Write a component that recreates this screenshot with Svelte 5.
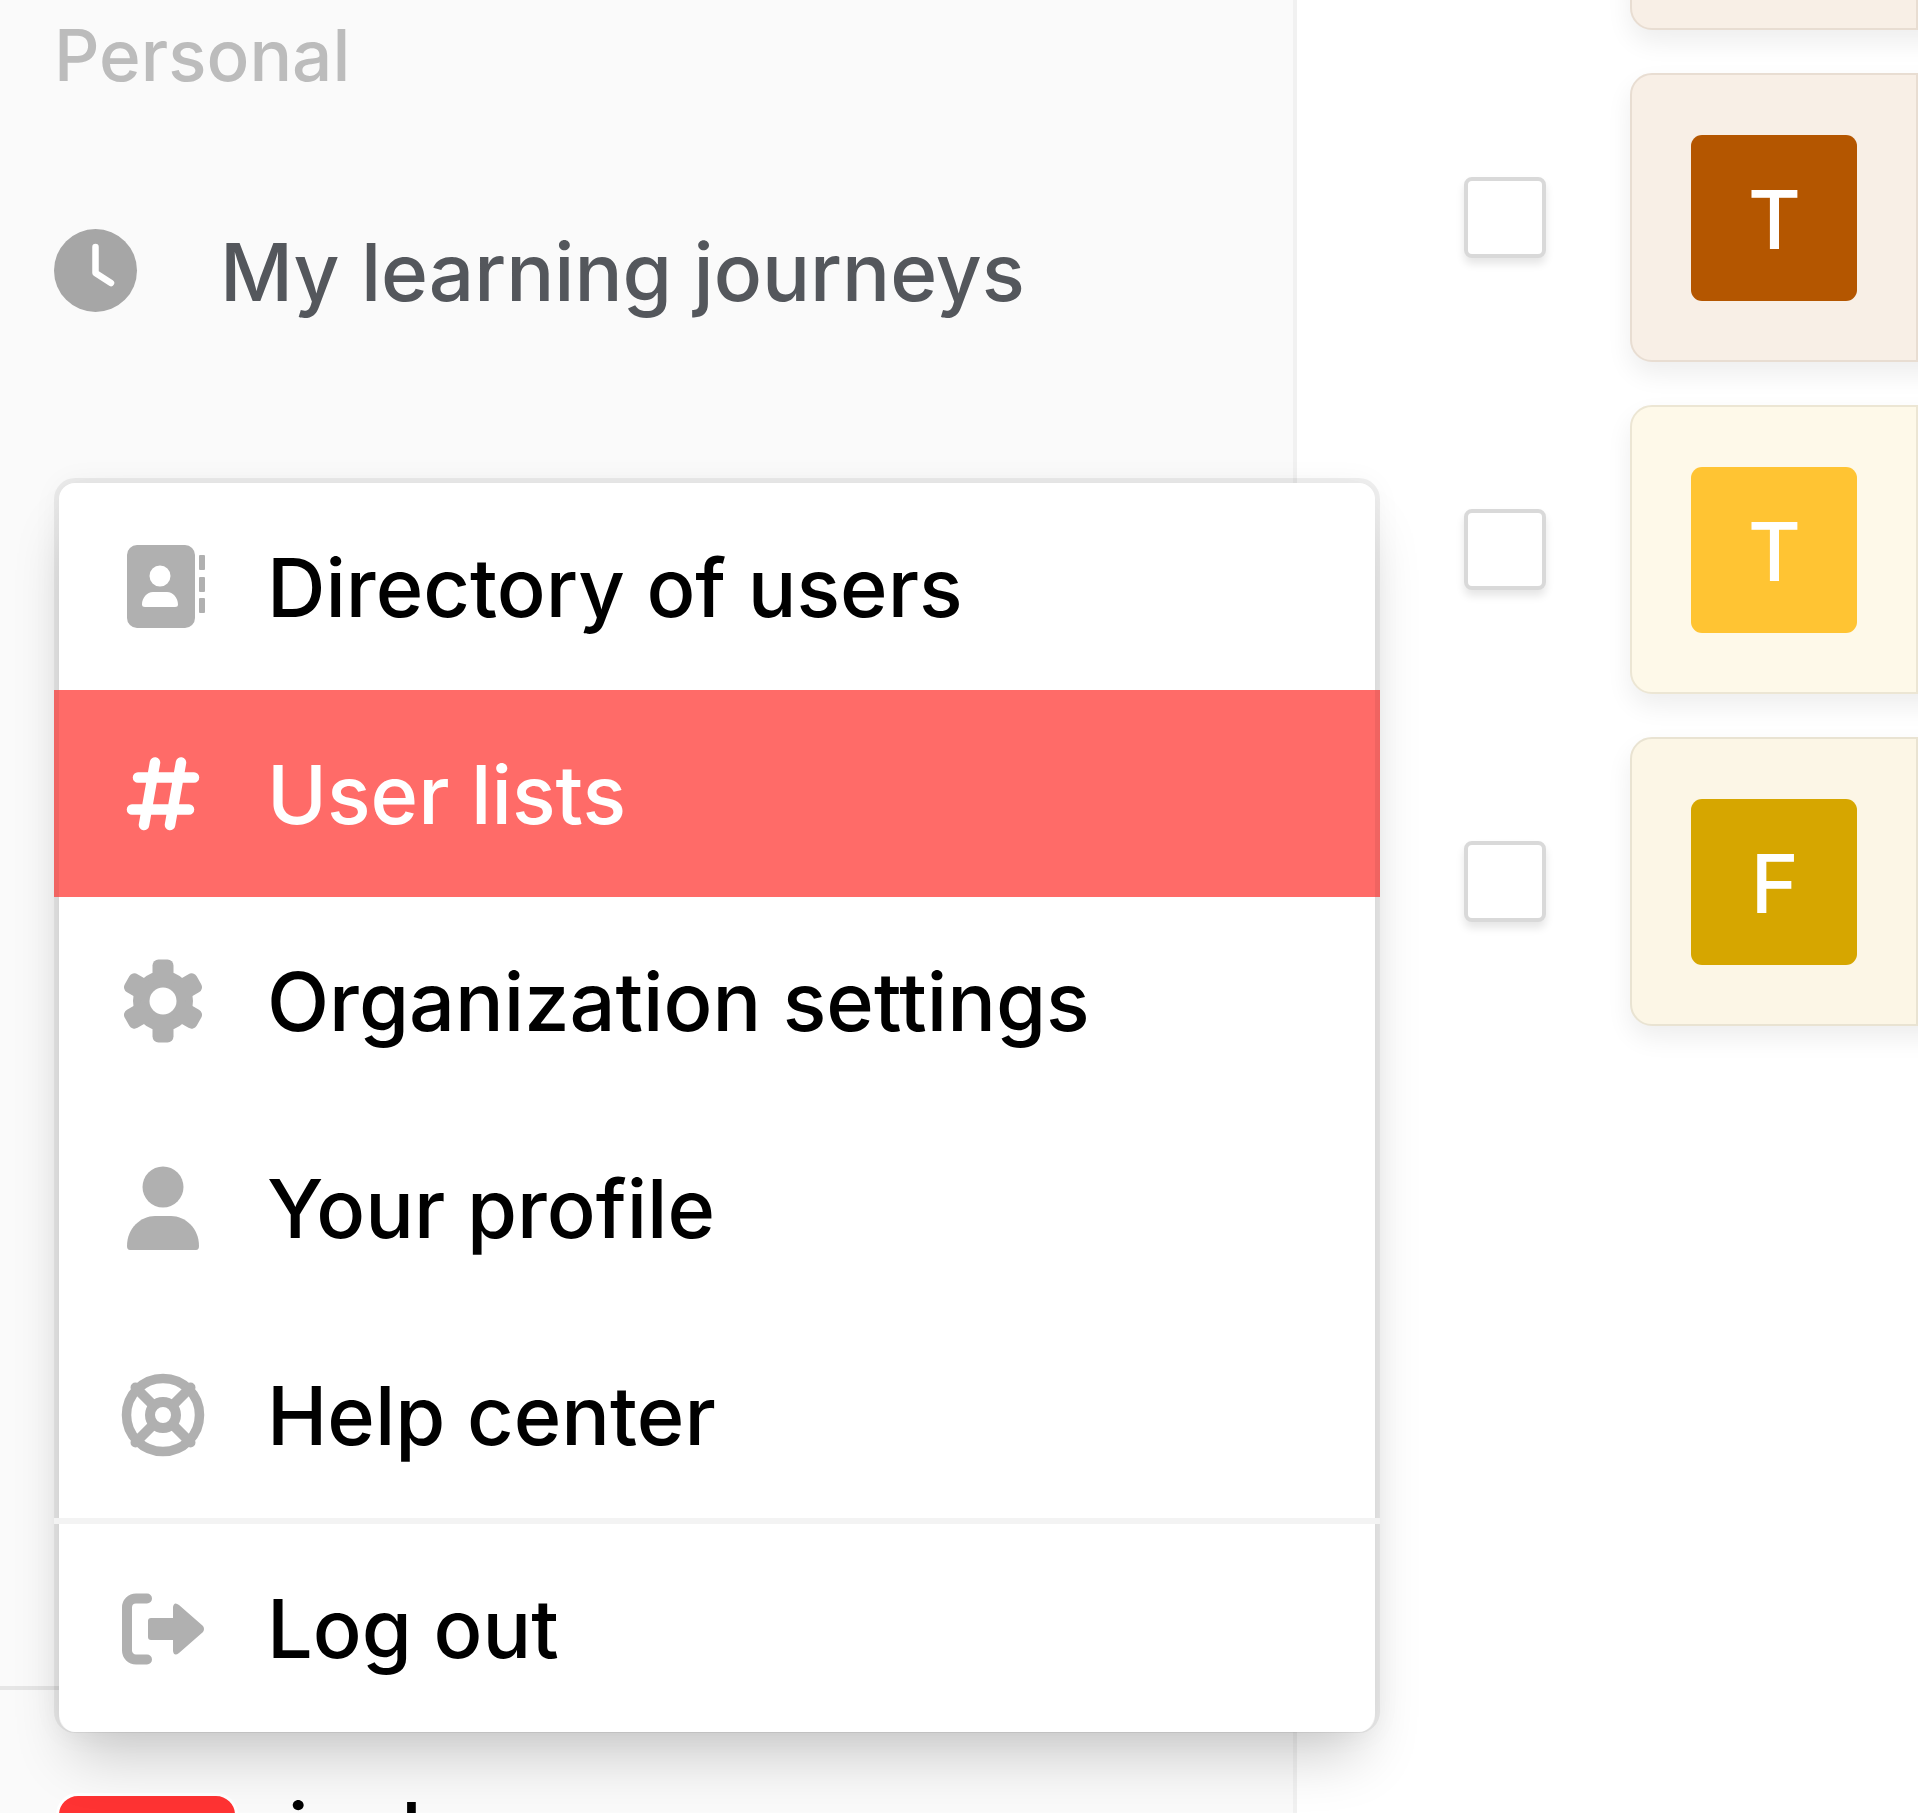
<script>
  const rows = [
    { bg: '#f8efe6', line: '#e8ddd2', tile: '#b45600', letter: 'T' },
    { bg: '#f8efe6', line: '#e8ddd2', tile: '#b45600', letter: 'T' },
    { bg: '#fef9e9', line: '#ece6d4', tile: '#ffc433', letter: 'T' },
    { bg: '#fcf6e6', line: '#e9e3d2', tile: '#d6a600', letter: 'F' }
  ];
</script>

<div class="page">
  <aside class="sidebar">
    <div class="section-title">Personal</div>
    <div class="nav-item">
      <svg class="clock" viewBox="0 0 84 84" aria-hidden="true">
        <circle cx="41.5" cy="41.5" r="41.5" fill="#a6a6a6" />
        <path d="M41.5 18V44L57 54" fill="none" stroke="#fff" stroke-width="6.500" stroke-linecap="round" stroke-linejoin="round" />
      </svg>
      <span>My learning journeys</span>
    </div>

    <div class="footer">
      <div class="avatar"></div>
      <span class="who">jack</span>
    </div>

    <div class="menu">
      <div class="item">
        <svg viewBox="0 0 84 84" aria-hidden="true">
          <path class="ico" fill-rule="evenodd" d="M16 0H64A10 10 0 0 1 74 10V73A10 10 0 0 1 64 83H16A10 10 0 0 1 6 73V10A10 10 0 0 1 16 0ZM39 20.500A10.500 10.500 0 1 0 39 41.500A10.500 10.500 0 1 0 39 20.500ZM32 47C26 47 21 53 21 59.500Q21 62 24 62H54Q57 62 57 59.500C57 53 52 47 46 47Z" />
          <rect class="ico" x="78" y="10" width="6" height="15" rx="1" />
          <rect class="ico" x="78" y="32" width="6" height="15" rx="1" />
          <rect class="ico" x="78" y="53" width="6" height="15" rx="1" />
        </svg>
        <span>Directory of users</span>
      </div>
      <div class="item active">
        <svg viewBox="0 0 84 84" aria-hidden="true">
          <path d="M34 10.500L23 73M60 10.500L49 73M17 25.500H73M11 57.500H68" fill="none" stroke="#fff" stroke-width="10.500" stroke-linecap="round" />
        </svg>
        <span>User lists</span>
      </div>
      <div class="item">
        <svg viewBox="0 0 84 84" aria-hidden="true">
          <g class="ico">
            <circle cx="42" cy="42" r="30" />
            <rect x="31.500" y="0.500" width="21" height="83" rx="6" />
            <rect x="31.500" y="0.500" width="21" height="83" rx="6" transform="rotate(60 42 42)" />
            <rect x="31.500" y="0.500" width="21" height="83" rx="6" transform="rotate(120 42 42)" />
          </g>
          <circle cx="42" cy="42" r="13.500" fill="#fff" />
        </svg>
        <span>Organization settings</span>
      </div>
      <div class="item">
        <svg viewBox="0 0 84 84" aria-hidden="true">
          <circle class="ico" cx="42" cy="21" r="20.500" />
          <path class="ico" d="M9 84H75Q78 84 78 80C78 62 64 50 50 50H34C20 50 6 62 6 80Q6 84 9 84Z" />
        </svg>
        <span>Your profile</span>
      </div>
      <div class="item">
        <svg viewBox="0 0 84 84" aria-hidden="true">
          <g fill="none" stroke="#b0b0b0">
            <circle cx="42" cy="42" r="36.500" stroke-width="9.500" />
            <circle cx="42" cy="42" r="13" stroke-width="10" />
            <path d="M14.500 14.500L32 32M69.500 14.500L52 32M14.500 69.500L32 52M69.500 69.500L52 52" stroke-width="10" stroke-linecap="round" />
          </g>
        </svg>
        <span>Help center</span>
      </div>
      <div class="rule"></div>
      <div class="item">
        <svg viewBox="0 0 84 84" aria-hidden="true">
          <path d="M26 12.500H15A9 9 0 0 0 6 21.500V64.500A9 9 0 0 0 15 73.500H26" fill="none" stroke="#b0b0b0" stroke-width="10" stroke-linecap="round" />
          <path class="ico" d="M30 32H52V21Q53 15 58 19L82 40Q84 43 82 46L58 67Q53 71 52 65V54H30Q27 54 27 51V35Q27 32 30 32Z" />
        </svg>
        <span>Log out</span>
      </div>
    </div>
  </aside>

  <main class="main">
    <div class="list">
      {#each rows as r}
        <div class="row">
          <div class="check"></div>
          <div class="card" style="--bg:{r.bg};--line:{r.line}">
            <div class="cell">
              <div class="tile" style="background:{r.tile}">{r.letter}</div>
            </div>
          </div>
        </div>
      {/each}
    </div>
  </main>
</div>

<style>
  :global(body) {
    margin: 0;
    background: #fff;
    font-family: Inter, "Liberation Sans", sans-serif;
  }
  .page {
    display: flex;
    width: 1918px;
    height: 1813px;
    overflow: hidden;
  }
  .sidebar {
    position: relative;
    z-index: 2;
    flex: none;
    display: flex;
    flex-direction: column;
    box-sizing: border-box;
    width: 1297px;
    height: 1813px;
    padding-top: 20px;
    background: #fafafa;
    border-right: 4px solid #f1f1f1;
  }
  .section-title {
    margin-left: 54px;
    font-size: 71px;
    line-height: 70px;
    font-weight: 450;
    color: #bcbcbc;
  }
  .nav-item {
    display: flex;
    align-items: center;
    gap: 82px;
    height: 120px;
    margin-top: 121px;
    padding-left: 54px;
    font-size: 80px;
    font-weight: 450;
    color: #54575c;
  }
  .clock {
    flex: none;
    width: 84px;
    height: 84px;
  }
  .footer {
    display: flex;
    align-items: flex-start;
    gap: 50px;
    box-sizing: border-box;
    height: 127px;
    margin-top: auto;
    padding: 103px 0 0 56px;
    border-top: 4px solid #e6e6e6;
    overflow: hidden;
  }
  .avatar {
    flex: none;
    width: 176px;
    height: 176px;
    border: 3px solid #fff;
    border-radius: 22px;
    background: #ff3333;
  }
  .who {
    font-size: 81px;
    line-height: 78px;
    font-weight: 500;
    color: #000;
  }
  .menu {
    position: absolute;
    left: 59px;
    top: 483px;
    width: 1316px;
    padding-bottom: 1px;
    background: #fff;
    border-radius: 16px;
    box-shadow: 0 36px 60px -14px rgba(0, 0, 0, 0.2), 0 0 30px rgba(0, 0, 0, 0.05);
  }
  .menu::after {
    content: "";
    position: absolute;
    inset: -5px -5px -1px;
    border: 5px solid rgba(0, 0, 0, 0.06);
    border-bottom-width: 1px;
    border-radius: 21px;
    pointer-events: none;
  }
  .item {
    display: flex;
    align-items: center;
    gap: 62px;
    box-sizing: border-box;
    height: 207px;
    margin: 0 -5px;
    padding-left: 67px;
    font-size: 81px;
    font-weight: 450;
    color: #000;
  }
  .item span {
    padding-top: 2px;
  }
  .item svg {
    flex: none;
    width: 84px;
    height: 84px;
  }
  .item.active {
    background: #ff6b68;
    color: #fff;
  }
  .ico {
    fill: #b0b0b0;
  }
  .rule {
    position: relative;
    z-index: 1;
    height: 6px;
    margin: 0 -5px;
    background: #f3f3f3;
  }
  .main {
    flex: 1;
    min-width: 0;
    overflow: hidden;
  }
  .list {
    display: flex;
    flex-direction: column;
    gap: 43px;
    margin-top: -259px;
    padding-left: 167px;
  }
  .row {
    display: flex;
    align-items: center;
    gap: 84px;
  }
  .check {
    flex: none;
    box-sizing: border-box;
    width: 82px;
    height: 81px;
    border: 4px solid #d9d9d9;
    border-radius: 8px;
    background: #fff;
    box-shadow: 0 6px 8px rgba(0, 0, 0, 0.1);
  }
  .card {
    flex: none;
    box-sizing: border-box;
    width: 1200px;
    height: 289px;
    border: 2px solid var(--line);
    border-radius: 22px;
    background: var(--bg);
    box-shadow: 0 12px 26px rgba(0, 0, 0, 0.07);
  }
  .cell {
    display: flex;
    align-items: center;
    justify-content: center;
    box-sizing: border-box;
    width: 286px;
    height: 100%;
    border-right: 2px solid var(--line);
  }
  .tile {
    display: flex;
    align-items: center;
    justify-content: center;
    box-sizing: border-box;
    width: 166px;
    height: 166px;
    padding-top: 4px;
    padding-left: 1px;
    border-radius: 11px;
    font-size: 81px;
    font-weight: 450;
    color: #fff;
  }
</style>
